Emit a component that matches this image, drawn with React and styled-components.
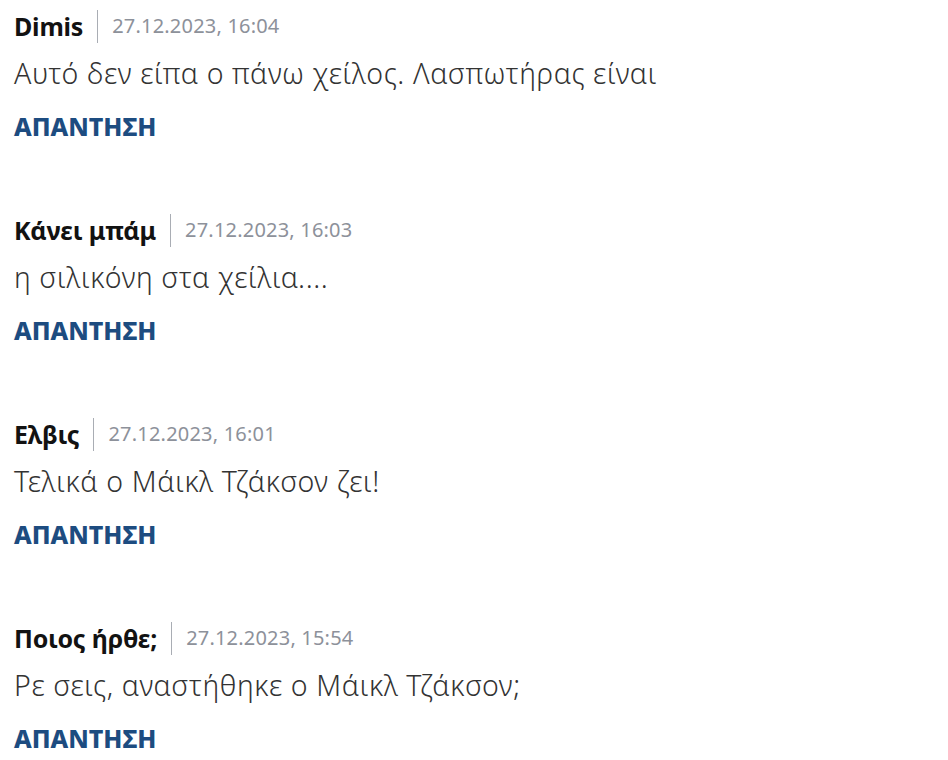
import React from 'react';
import styled, { createGlobalStyle } from 'styled-components';

const GlobalStyle = createGlobalStyle`
  html, body {
    margin: 0;
    padding: 0;
    background: #ffffff;
  }
  body {
    font-family: "Noto Sans", "Open Sans", sans-serif;
    -webkit-font-smoothing: antialiased;
  }
`;

const CommentList = styled.div`
  display: flex;
  flex-direction: column;
  gap: 71px;
  padding: 8px 14px 0;
`;

const Comment = styled.article`
  display: flex;
  flex-direction: column;
`;

const Meta = styled.div`
  display: flex;
  align-items: center;
  height: 36px;
`;

const Author = styled.span`
  font-size: 25px;
  line-height: 36px;
  font-weight: 700;
  color: #121212;
  letter-spacing: -0.2px;
`;

const Divider = styled.span`
  width: 1px;
  height: 33px;
  background: #a9adb4;
  margin: 0 14px;
`;

const Date = styled.time`
  font-size: 20px;
  line-height: 36px;
  color: #8d919a;
  letter-spacing: 0.2px;
`;

const Body = styled.p`
  margin: 11px 0 0;
  font-size: 28.5px;
  line-height: 36px;
  font-weight: 300;
  color: #333333;
  letter-spacing: 0.6px;
`;

const Reply = styled.button`
  align-self: flex-start;
  background: none;
  border: none;
  padding: 0;
  margin-top: 20px;
  font-family: inherit;
  font-size: 25px;
  line-height: 30px;
  font-weight: 800;
  color: #1d4c80;
  cursor: pointer;
`;

const comments = [
  { author: 'Dimis', date: '27.12.2023, 16:04', text: 'Αυτό δεν είπα ο πάνω χείλος. Λασπωτήρας είναι' },
  { author: 'Κάνει μπάμ', date: '27.12.2023, 16:03', text: 'η σιλικόνη στα χείλια....' },
  { author: 'Ελβις', date: '27.12.2023, 16:01', text: 'Τελικά ο Μάικλ Τζάκσον ζει!' },
  { author: 'Ποιος ήρθε;', date: '27.12.2023, 15:54', text: 'Ρε σεις, αναστήθηκε ο Μάικλ Τζάκσον;' },
];

const App = () => (
  <>
    <GlobalStyle />
    <CommentList>
      {comments.map((c) => (
        <Comment key={c.date}>
          <Meta>
            <Author>{c.author}</Author>
            <Divider />
            <Date>{c.date}</Date>
          </Meta>
          <Body>{c.text}</Body>
          <Reply>ΑΠΑΝΤΗΣΗ</Reply>
        </Comment>
      ))}
    </CommentList>
  </>
);

export default App;
